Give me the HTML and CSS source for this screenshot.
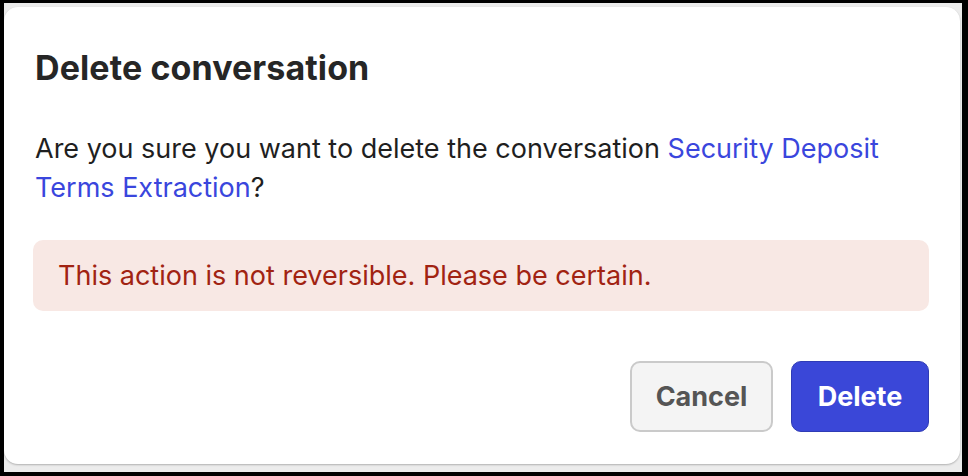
FILE: index.html
```html
<!DOCTYPE html>
<html lang="en">
<head>
<meta charset="utf-8">
<title>Delete conversation</title>
<link rel="stylesheet" href="styles.css">
</head>
<body>
<div class="screen">
  <div class="modal" role="dialog" aria-labelledby="dlg-title">
    <h2 class="title" id="dlg-title">Delete conversation</h2>
    <p class="message"><span class="line">Are you sure you want to delete the conversation <a class="link" href="#">Security Deposit</a></span><span class="line"><a class="link" href="#">Terms Extraction</a>?</span></p>
    <div class="alert">This action is not reversible. Please be certain.</div>
    <div class="actions">
      <button class="btn btn-cancel" type="button">Cancel</button>
      <button class="btn btn-delete" type="button">Delete</button>
    </div>
  </div>
</div>
</body>
</html>
```

FILE: styles.css
```css
* { box-sizing: border-box; }
html, body { margin: 0; padding: 0; }
body {
  background: #000;
  width: 968px;
  height: 476px;
  overflow: hidden;
  font-family: Inter, "Liberation Sans", sans-serif;
}
.screen {
  margin: 3px 6px 0 4px;
  height: 469px;
  background: #ececec;
  padding: 4px 2px 0 0;
}
.modal {
  background: #fff;
  height: 457px;
  border-radius: 14px;
  box-shadow: 0 1px 2px rgba(0,0,0,0.25);
  padding: 37px 31px 0 29px;
  display: flex;
  flex-direction: column;
}
.title {
  margin: 0 0 0 2px;
  font-size: 34px;
  font-weight: 700;
  color: #262626;
  line-height: 48px;
  letter-spacing: 0.1px;
}
.message {
  margin: 37px 0 0 2px;
  font-size: 27px;
  line-height: 39px;
  color: #1f1f1f;
}
.line {
  display: block;
  white-space: nowrap;
}
.link {
  color: #3a46dd;
  text-decoration: none;
}
.alert {
  margin-top: 33px;
  background: #f8e8e4;
  border-radius: 10px;
  height: 71px;
  padding: 0 25px;
  display: flex;
  align-items: center;
  font-size: 27px;
  color: #a12312;
}
.actions {
  margin-top: 50px;
  display: flex;
  justify-content: flex-end;
  gap: 18px;
}
.btn {
  height: 71px;
  border-radius: 10px;
  font-family: Inter, "Liberation Sans", sans-serif;
  font-size: 27px;
  font-weight: 700;
  padding: 0;
  cursor: pointer;
}
.btn-cancel {
  width: 143px;
  background: #f4f4f4;
  border: 2px solid #cacaca;
  color: #555;
}
.btn-delete {
  width: 138px;
  background: #3a47d8;
  border: 1px solid #2f3bb5;
  color: #fff;
}
```
